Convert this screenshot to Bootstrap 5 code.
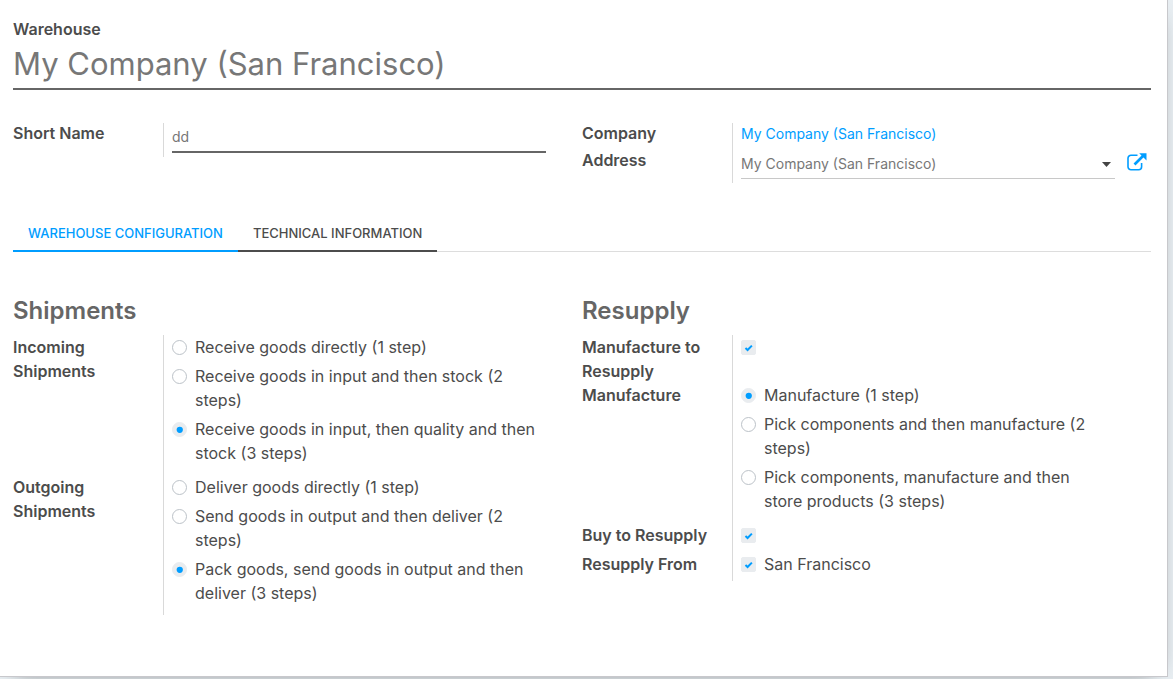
<!DOCTYPE html>
<html lang="en">
<head>
<meta charset="utf-8">
<meta name="viewport" content="width=device-width, initial-scale=1">
<title>Warehouse</title>
<link href="https://cdn.jsdelivr.net/npm/bootstrap@5.3.0/dist/css/bootstrap.min.css" rel="stylesheet">
<style>
  :root { --accent: #009dff; --ink: #4c4c4c; --rule: #d9d9d9; }
  body { font-family: Inter, "Open Sans", sans-serif; font-size: 16px; line-height: 24px; color: var(--ink); background: #e8eef2; }
  .sheet { margin: 0 5px 2px 0; padding: 17px 16px 61px 13px; border: solid #c8c8cc; border-width: 0 1px 1px 0; box-shadow: 0 5px 20px -15px #000; }
  .field-label { font-weight: 600; color: var(--ink); }
  .line-input { border: 0; border-bottom: 2px solid #666; border-radius: 0; padding: 0; color: #777; background: transparent; width: 100%; }
  .line-input:focus { outline: 0; border-color: var(--accent); }
  .title-input { font-size: 31px; line-height: 40px; padding: 3px 0 4px; }
  .small-input { font-size: 14px; line-height: 22px; padding: 3px 0; }
  select.small-input { appearance: none; border-bottom: 1px solid #c8c8c8; padding-right: 24px; }
  .partner-link { display: block; font-size: 14px; line-height: 22px; padding-bottom: 5px; color: var(--accent); text-decoration: none; }
  .select-caret { position: absolute; right: 4px; top: 12px; pointer-events: none; }
  .open-btn { border: 0; padding: 0; background: none; color: var(--accent); line-height: 0; margin: 3px 4px 0 12px; }

  /* A group is two columns: field labels, then values behind a vertical rule */
  .group { display: grid; grid-template-columns: 150px minmax(0, 1fr); padding-right: 36px; }
  .group > .value { border-left: 1px solid var(--rule); padding-left: 8px; }
  .group-wide { padding-right: 0; }
  .top-row { margin-top: 33px; }
  .top-row .field-label { line-height: 20px; }

  .nav-tabs { margin-top: 34px; border-bottom: 1px solid #ddd; }
  .nav-tabs .nav-link { font-size: 13px; font-weight: 500; line-height: 20px; text-transform: uppercase; color: var(--ink); border: 0; border-bottom: 2px solid var(--ink); border-radius: 0; padding: 6px 15px 7px; }
  .nav-tabs .nav-link.active { color: var(--accent); border-color: var(--accent); }

  .config-row { margin-top: 43px; }
  .section-title { font-size: 24px; font-weight: 600; line-height: 32px; color: #666; margin: 0 0 8px; }
  .choices { padding-bottom: 5px; }
  .choice { display: flex; gap: 8px; min-height: 24px; margin-bottom: 5px; padding-right: 8px; }
  .form-check-input { width: 15px; height: 15px; flex: none; margin: 5px 0 0; border-color: #bcc2c8; }
  .form-check-input:checked { background-color: #e9ecef; border-color: #e9ecef; }
  .form-check-input:checked[type=radio] { background-image: url("data:image/svg+xml,%3csvg xmlns='http://www.w3.org/2000/svg' viewBox='0 0 15 15'%3e%3ccircle cx='7.8' cy='7.8' r='3.6' fill='%23009dff'/%3e%3c/svg%3e"); }
  .form-check-input:checked[type=checkbox] { background-image: url("data:image/svg+xml,%3csvg xmlns='http://www.w3.org/2000/svg' viewBox='0 0 15 15'%3e%3cpath d='M4 8.2l2.4 2.2L11.4 5.3' fill='none' stroke='%23009dff' stroke-width='2.3'/%3e%3c/svg%3e"); }
  .form-check-input[type=checkbox] { border-radius: 2px; }
</style>
</head>
<body>
<main class="sheet bg-white">
  <label class="field-label d-block" for="wh-name">Warehouse</label>
  <input class="line-input title-input d-block" id="wh-name" type="text" value="My Company (San Francisco)">

  <div class="row g-0 top-row">
    <div class="col-6">
      <div class="group">
        <label class="field-label" for="wh-code">Short Name</label>
        <div class="value pb-1"><input class="line-input small-input d-block" id="wh-code" type="text" value="dd"></div>
      </div>
    </div>
    <div class="col-6">
      <div class="group group-wide">
        <span class="field-label">Company</span>
        <div class="value"><a class="partner-link" href="#">My Company (San Francisco)</a></div>
        <label class="field-label" for="wh-address">Address</label>
        <div class="value d-flex align-items-start pb-1">
          <div class="position-relative flex-grow-1">
            <select class="line-input small-input d-block" id="wh-address"><option>My Company (San Francisco)</option></select>
            <svg class="select-caret" width="9" height="5" viewBox="0 0 9 5" aria-hidden="true"><path d="M0 0h9L4.5 5z" fill="#444"/></svg>
          </div>
          <button class="open-btn" type="button" aria-label="Open address">
            <svg width="20" height="18" viewBox="0 0 20 18" fill="none" stroke="currentColor"><path d="M10.500 2.200H4A3 3 0 0 0 1 5.200v8.600a3 3 0 0 0 3 3h7.600a3 3 0 0 0 3-3V10" stroke-width="1.600"/><path d="M7.500 11.500L16 3" stroke-width="2.600"/><path d="M12.200.3h7.300v7.300z" fill="currentColor" stroke="none"/></svg>
          </button>
        </div>
      </div>
    </div>
  </div>

  <ul class="nav nav-tabs" role="tablist">
    <li class="nav-item" role="presentation"><button class="nav-link active" type="button" role="tab" aria-selected="true">Warehouse Configuration</button></li>
    <li class="nav-item" role="presentation"><button class="nav-link" type="button" role="tab" aria-selected="false">Technical Information</button></li>
  </ul>

  <div class="row g-0 config-row">
    <section class="col-6">
      <h2 class="section-title">Shipments</h2>
      <div class="group">
        <span class="field-label" id="l-in">Incoming<br>Shipments</span>
        <div class="value choices" role="radiogroup" aria-labelledby="l-in">
          <div class="choice"><input class="form-check-input" type="radio" name="incoming" id="in1"><label for="in1">Receive goods directly (1 step)</label></div>
          <div class="choice"><input class="form-check-input" type="radio" name="incoming" id="in2"><label for="in2">Receive goods in input and then stock (2 steps)</label></div>
          <div class="choice"><input class="form-check-input" type="radio" name="incoming" id="in3" checked><label for="in3">Receive goods in input, then quality and then stock (3 steps)</label></div>
        </div>
        <span class="field-label" id="l-out">Outgoing<br>Shipments</span>
        <div class="value choices" role="radiogroup" aria-labelledby="l-out">
          <div class="choice"><input class="form-check-input" type="radio" name="outgoing" id="out1"><label for="out1">Deliver goods directly (1 step)</label></div>
          <div class="choice"><input class="form-check-input" type="radio" name="outgoing" id="out2"><label for="out2">Send goods in output and then deliver (2 steps)</label></div>
          <div class="choice"><input class="form-check-input" type="radio" name="outgoing" id="out3" checked><label for="out3">Pack goods, send goods in output and then deliver (3 steps)</label></div>
        </div>
      </div>
    </section>
    <section class="col-6">
      <h2 class="section-title">Resupply</h2>
      <div class="group">
        <label class="field-label" for="mto">Manufacture to Resupply</label>
        <div class="value"><input class="form-check-input d-block" type="checkbox" id="mto" checked></div>
        <span class="field-label" id="l-man">Manufacture</span>
        <div class="value choices" role="radiogroup" aria-labelledby="l-man">
          <div class="choice"><input class="form-check-input" type="radio" name="manufacture" id="m1" checked><label for="m1">Manufacture (1 step)</label></div>
          <div class="choice"><input class="form-check-input" type="radio" name="manufacture" id="m2"><label for="m2">Pick components and then manufacture (2 steps)</label></div>
          <div class="choice"><input class="form-check-input" type="radio" name="manufacture" id="m3"><label for="m3">Pick components, manufacture and then store products (3 steps)</label></div>
        </div>
        <label class="field-label" for="buy">Buy to Resupply</label>
        <div class="value"><div class="choice"><input class="form-check-input" type="checkbox" id="buy" checked></div></div>
        <span class="field-label">Resupply From</span>
        <div class="value"><div class="choice"><input class="form-check-input" type="checkbox" id="sf" checked><label for="sf">San Francisco</label></div></div>
      </div>
    </section>
  </div>
</main>
<script src="https://cdn.jsdelivr.net/npm/bootstrap@5.3.0/dist/js/bootstrap.bundle.min.js"></script>
</body>
</html>
